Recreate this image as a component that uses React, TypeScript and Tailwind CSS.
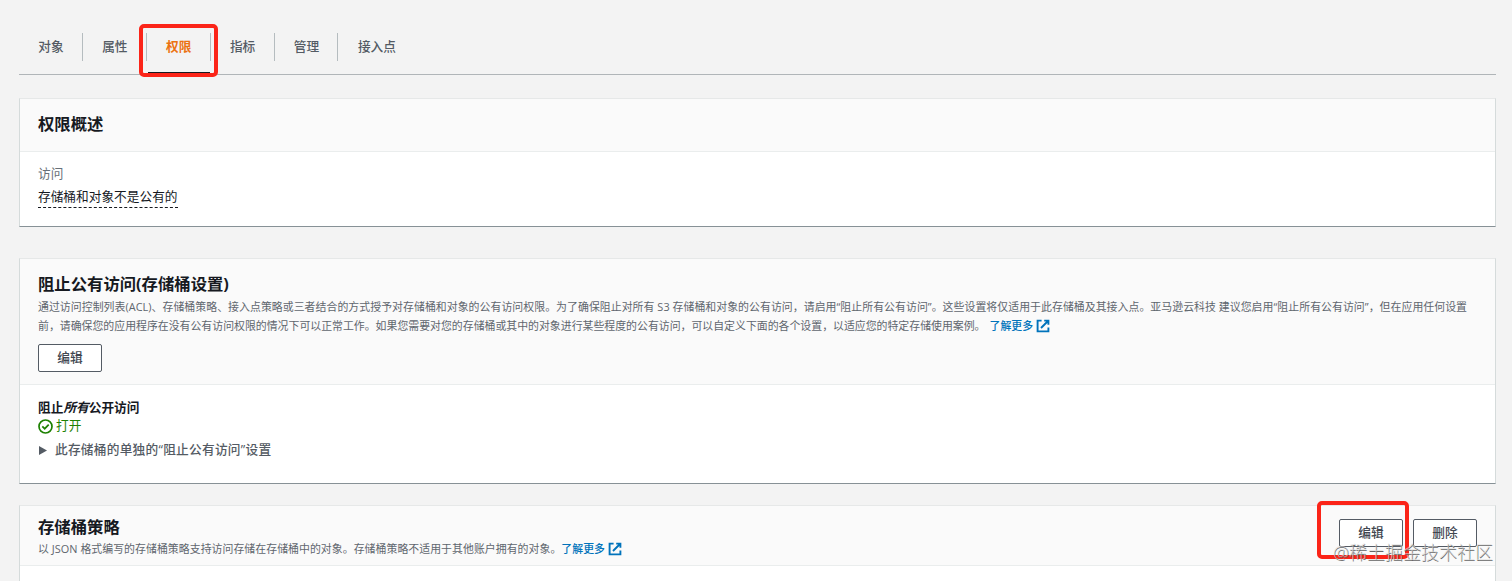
import type { ReactNode } from 'react';

const tabs = ['对象', '属性', '权限', '指标', '管理', '接入点'];

function ExternalIcon() {
  return (
    <svg className="ml-[3px] h-[14px] w-[14px] shrink-0" viewBox="0 0 14 14" fill="none" stroke="#0073bb" strokeWidth="1.9">
      <path d="M5.6 1.6H1.6v10.8h10.8V8.6" />
      <path d="M8.2 1.6h4.2v4.2M12 2L5 9" />
    </svg>
  );
}

function LearnMore() {
  return (
    <a href="#" className="flex items-center text-[#0073bb]">
      <span className="font-medium">了解更多</span>
      <ExternalIcon />
    </a>
  );
}

function Button({ children }: { children: ReactNode }) {
  return (
    <button className="flex h-[28px] w-[64px] items-center justify-center rounded-[2px] border border-[#545b64] bg-white pb-[2px] text-[12.7px] leading-none font-medium text-[#414750]">
      {children}
    </button>
  );
}

function Card({ className, children }: { className: string; children: ReactNode }) {
  return (
    <section className={`flex flex-col border border-t-[#e6e8e8] border-r-[#d5dbdb] border-b-[#879196] border-l-[#d5dbdb] bg-white ${className}`}>
      {children}
    </section>
  );
}

export default function App() {
  return (
    <div className="relative h-[581px] w-[1512px] overflow-hidden bg-[#f3f3f3] pl-[19px] font-['Open_Sans','Noto_Sans_CJK_SC',sans-serif] text-[12.7px] text-[#16191f]">
      <nav className="flex h-[75px] w-[1477px] border-b border-[#b0b5b8] pt-[20px]">
        {tabs.map((tab) => {
          const active = tab === '权限';
          return (
            <div key={tab} className="relative flex h-[54px] w-[63.9px] items-center justify-center whitespace-nowrap last:w-[77px]">
              <span className={active ? 'font-bold text-[#ec7211]' : 'font-medium text-[#545b64]'}>{tab}</span>
              {tab !== '接入点' && <span className="absolute right-0 h-[28px] w-px bg-[#b5bcbf]" />}
              {active && <span className="absolute right-px bottom-0 left-px h-[2px] bg-[#16191f]" />}
            </div>
          );
        })}
      </nav>

      <Card className="mt-[23px] h-[129px] w-[1477px]">
        <div className="flex h-[53px] items-center border-b border-[#eaeded] bg-[#fafafa] pb-[2px] pl-[18px]">
          <h2 className="text-[16.35px] font-bold">权限概述</h2>
        </div>
        <div className="pt-[12px] pl-[18px]">
          <div className="h-[18px] leading-[18px] text-[#687078]">访问</div>
          <div className="mt-[4px] inline-block h-[22px] border-b border-dashed border-[#16191f] leading-[21px]">存储桶和对象不是公有的</div>
        </div>
      </Card>

      <Card className="mt-[31px] h-[226px] w-[1477px]">
        <div className="h-[126px] border-b border-[#eaeded] bg-[#fafafa] pt-[13px] pl-[18px]">
          <h2 className="h-[24px] text-[16.35px] leading-[24px] font-bold">阻止公有访问(存储桶设置)</h2>
          <div className="mt-[2px] text-[10.9px] leading-[18.5px] whitespace-nowrap text-[#5f666e]">
            <p className="tracking-[0.043px]">通过访问控制列表(ACL)、存储桶策略、接入点策略或三者结合的方式授予对存储桶和对象的公有访问权限。为了确保阻止对所有 S3 存储桶和对象的公有访问，请启用“阻止所有公有访问”。这些设置将仅适用于此存储桶及其接入点。亚马逊云科技 建议您启用“阻止所有公有访问”，但在应用任何设置</p>
            <div className="flex">
              <p className="mr-[4px]">前，请确保您的应用程序在没有公有访问权限的情况下可以正常工作。如果您需要对您的存储桶或其中的对象进行某些程度的公有访问，可以自定义下面的各个设置，以适应您的特定存储使用案例。</p>
              <LearnMore />
            </div>
          </div>
          <div className="mt-[9px]">
            <Button>编辑</Button>
          </div>
        </div>
        <div className="pt-[13px] pl-[18px]">
          <h3 className="h-[18px] leading-[19px] font-bold">
            阻止<em>所有</em>公开访问
          </h3>
          <div className="flex h-[18px] items-center text-[#1d8102]">
            <svg className="mt-[2px] mr-[3px] h-[15px] w-[15px]" viewBox="0 0 15 15" fill="none" stroke="#1d8102" strokeWidth="1.7">
              <circle cx="7.5" cy="7.5" r="6.5" />
              <path d="M4.3 7.3l2.4 2.4 4-4" />
            </svg>
            <span className="leading-[18px]">打开</span>
          </div>
          <div className="mt-[6px] flex h-[20px] items-center text-[#545b64]">
            <svg className="mt-px mr-[8px] ml-px h-[9px] w-[8px]" viewBox="0 0 8 9" fill="#545b64">
              <path d="M0 0l8 4.5L0 9z" />
            </svg>
            <span className="font-medium tracking-[0.25px]">此存储桶的单独的“阻止公有访问”设置</span>
          </div>
        </div>
      </Card>

      <Card className="mt-[21px] h-[120px] w-[1477px]">
        <div className="flex h-[60px] justify-between border-b border-[#eaeded] bg-[#fafafa] pr-[18px] pl-[18px]">
          <div className="pt-[9px]">
            <h2 className="h-[24px] text-[16.35px] leading-[24px] font-bold">存储桶策略</h2>
            <div className="flex text-[10.9px] leading-[19px] whitespace-nowrap text-[#5f666e]">
              <p className="tracking-[0.04px]">以 JSON 格式编写的存储桶策略支持访问存储在存储桶中的对象。存储桶策略不适用于其他账户拥有的对象。</p>
              <LearnMore />
            </div>
          </div>
          <div className="flex gap-[10px] pt-[13px]">
            <Button>编辑</Button>
            <Button>删除</Button>
          </div>
        </div>
      </Card>

      {/* highlight frames */}
      <div className="absolute top-[24px] left-[139px] h-[53px] w-[79px] rounded-[5px] border-4 border-[#fb2418]" />
      <div className="absolute top-[501px] left-[1317px] h-[58px] w-[92px] rounded-[5px] border-4 border-[#fb2418]" />
      <div className="absolute top-[540px] left-[1333px] text-[18px] leading-[24px] font-light whitespace-nowrap text-[#dcdcdc]/70 [text-shadow:0.5px_0.5px_0.5px_#666]">@稀土掘金技术社区</div>
    </div>
  );
}
